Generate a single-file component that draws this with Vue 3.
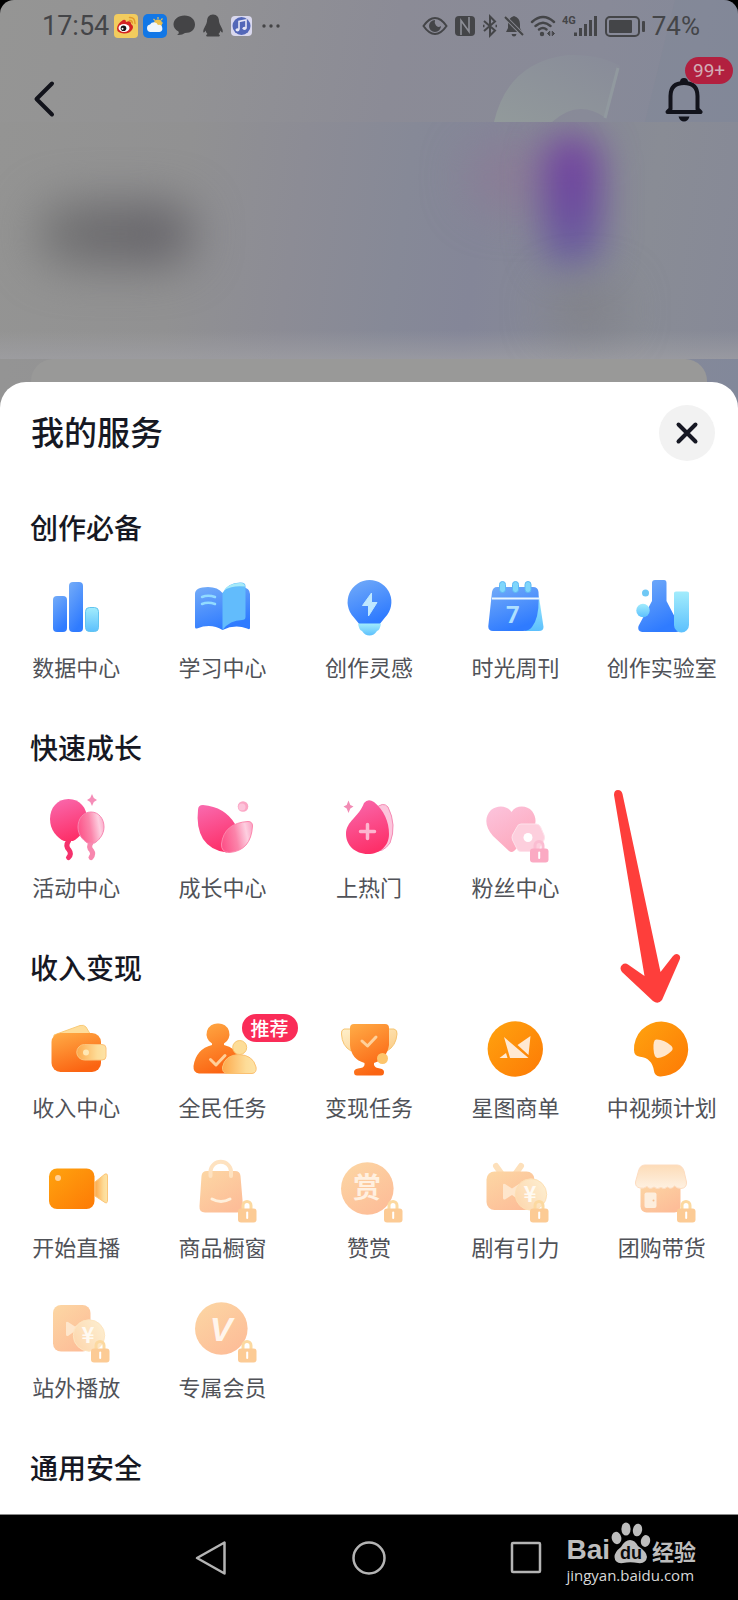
<template>
  <div class="phone">
    <svg class="sprite" aria-hidden="true">
      <defs>
        <linearGradient id="g-blue" x1="0" y1="0" x2=".4" y2="1">
          <stop offset="0" stop-color="#74acf8" />
          <stop offset="1" stop-color="#2f7bff" />
        </linearGradient>
        <linearGradient id="g-cyan" x1="0" y1="0" x2="0" y2="1">
          <stop offset="0" stop-color="#a2ecfc" />
          <stop offset="1" stop-color="#5cc0fd" />
        </linearGradient>
        <linearGradient id="g-pink" x1=".2" y1="0" x2=".5" y2="1">
          <stop offset="0" stop-color="#f968ac" />
          <stop offset="1" stop-color="#fd2f68" />
        </linearGradient>
        <linearGradient id="g-rose" x1="0" y1=".5" x2="1" y2=".3">
          <stop offset="0" stop-color="#fd5389" />
          <stop offset=".45" stop-color="#fb84aa" />
          <stop offset=".8" stop-color="#fdcfe0" />
          <stop offset="1" stop-color="#fba9c8" />
        </linearGradient>
        <linearGradient id="g-blush" x1="0" y1="0" x2=".6" y2="1">
          <stop offset="0" stop-color="#fcc4dd" />
          <stop offset="1" stop-color="#fda9bd" />
        </linearGradient>
        <linearGradient id="g-orange" x1=".1" y1="0" x2=".5" y2="1">
          <stop offset="0" stop-color="#ffaa45" />
          <stop offset="1" stop-color="#fb6412" />
        </linearGradient>
        <linearGradient id="g-amber" x1="0" y1="0" x2="1" y2="1">
          <stop offset="0" stop-color="#ffa30f" />
          <stop offset="1" stop-color="#fd7a05" />
        </linearGradient>
        <linearGradient id="g-gold" x1="0" y1="0" x2="1" y2="0">
          <stop offset="0" stop-color="#fda94b" />
          <stop offset=".7" stop-color="#fddc98" />
          <stop offset="1" stop-color="#fde3a6" />
        </linearGradient>
        <linearGradient id="g-cream" x1="0" y1="0" x2="1" y2="1">
          <stop offset="0" stop-color="#fff0cb" />
          <stop offset="1" stop-color="#fbcb85" />
        </linearGradient>
        <linearGradient id="g-peach" x1="0" y1="0" x2=".7" y2="1">
          <stop offset="0" stop-color="#fcd7a4" />
          <stop offset="1" stop-color="#fdbd98" />
        </linearGradient>
        <linearGradient id="g-coin" x1="0" y1=".8" x2="1" y2=".2">
          <stop offset="0" stop-color="#fdd7ae" />
          <stop offset="1" stop-color="#fdeed0" />
        </linearGradient>
        <linearGradient id="g-roof" x1="0" y1="0" x2="0" y2="1">
          <stop offset="0" stop-color="#fddcb8" />
          <stop offset="1" stop-color="#fef1e2" />
        </linearGradient>
      </defs>

      <symbol id="i-data" viewBox="0 0 72 72">
        <rect x="13" y="23" width="14" height="36" rx="4" fill="url(#g-blue)" />
        <rect x="29" y="9" width="14" height="50" rx="4" fill="url(#g-blue)" />
        <rect x="45.500" y="34.500" width="13" height="24" rx="4" fill="url(#g-cyan)" stroke="#62c4f0" />
      </symbol>

      <symbol id="i-book" viewBox="0 0 72 72">
        <path d="M8 21Q8 14 21 14Q31 14 35.500 20Q42 14 55 14Q63 15 63 21V55Q63 57 60 55.500Q48 51 35.500 57Q24 50 10 55.500Q8 56 8 54Z" fill="url(#g-blue)" />
        <path d="M35.500 20Q41 9 54 9.500Q58.500 9.500 58.500 13V44Q58.500 47 55 47Q43 47 35.500 57Z" fill="#62bcfc" />
        <path d="M37 17Q43 9.500 54 10Q58 10 58 13.500Q46 12 37 17Z" fill="#a6eaf8" />
        <path d="M15 24Q21 21.500 28 24M15 31Q21 28.500 28 31" fill="none" stroke="#92dbff" stroke-width="2.500" stroke-linecap="round" />
      </symbol>

      <symbol id="i-bulb" viewBox="0 0 72 72">
        <path d="M36.500 7A22 22 0 0 1 52 44.500L46 52H27L20.500 44A22 22 0 0 1 36.500 7Z" fill="url(#g-blue)" />
        <path d="M25 50.500H48Q47 57 44 58Q41 62.500 36.500 62.500Q32 62.500 29 58Q26 57 25 50.500Z" fill="url(#g-cyan)" />
        <path d="M38.500 20L29.500 32.500H35.500V43L44 29.500H38.500Z" fill="#bfe8ff" stroke="#bfe8ff" stroke-linejoin="round" />
      </symbol>

      <symbol id="i-calendar" viewBox="0 0 72 72">
        <path d="M56 20L60 24L64.500 54Q64.500 58 60 58H46Z" fill="url(#g-cyan)" />
        <path d="M18 14H54Q59 14 59.500 19Q61 44 53 54Q50 58 44 58H14Q9 58 9.300 53L13 19Q14 14 18 14Z" fill="url(#g-blue)" />
        <path d="M13 25.500H60" stroke="#e8f5ff" stroke-width="2" />
        <g fill="#7fd6fb" stroke="#5cb8f5">
          <rect x="20.500" y="8.500" width="6" height="11" rx="3" />
          <rect x="33.500" y="8.500" width="6" height="11" rx="3" />
          <rect x="46" y="8.500" width="6" height="11" rx="3" />
        </g>
      </symbol>

      <symbol id="i-lab" viewBox="0 0 72 72">
        <path d="M29 7H38Q40.500 7 40.500 10V28L54 54Q54 59 50 59H16Q11 58 12.500 53L26 28V10Q26 7 29 7Z" fill="url(#g-blue)" />
        <path d="M48 20Q48 18.500 50 18.500H61Q63 18.500 63 20V52A7.500 7.500 0 0 1 48 52Z" fill="url(#g-cyan)" />
        <circle cx="17" cy="37.500" r="6.700" fill="url(#g-cyan)" />
        <circle cx="19.500" cy="20" r="3.500" fill="#6fc8f5" />
      </symbol>

      <symbol id="i-balloon" viewBox="0 0 72 72">
        <path d="M28.500 48Q25 53 29 57Q32 61 28.500 64.500" fill="none" stroke="#f5316c" stroke-width="5" stroke-linecap="round" />
        <path d="M28.500 6C40 6 47 15 47 26C47 37 39 45 33 48H24C17 45 10 37 10 26C10 15 17 6 28.500 6Z" fill="url(#g-pink)" />
        <path d="M51 50Q48 54 51.500 57.500Q54 61 51 64.500" fill="none" stroke="#f887ae" stroke-width="5" stroke-linecap="round" />
        <path d="M51 19C59 19 64 26 64 34C64 42 58 48 54.500 50H47.500C43 47 38 42 38 34C38 26 43 19 51 19Z" fill="url(#g-rose)" stroke="#f886b1" />
        <path d="M52 1L53.800 5L57 7L53.800 9L52 13L50.200 9L47 7L50.200 5Z" fill="#f58db8" />
      </symbol>

      <symbol id="i-leaf" viewBox="0 0 72 72">
        <path d="M11 17Q11 12 16 12Q38 14 48 31Q54 46 40 59.500Q24 58 16 46Q9 34 11 17Z" fill="url(#g-pink)" />
        <path d="M61 28.500Q65.500 28.500 65.500 33Q64 58 42 59.500Q34 59 34.500 51Q37 30 61 28.500Z" fill="url(#g-rose)" stroke="#fc86ac" />
        <circle cx="56" cy="13.500" r="5.300" fill="#fba6c5" />
        <circle cx="55" cy="14" r="3.500" fill="#fdc3da" />
      </symbol>

      <symbol id="i-drop" viewBox="0 0 72 72">
        <path d="M42 16Q50 8 55 14Q64 32 57 50Q50 60 40 58Z" fill="#fcc5dc" stroke="#f58bb4" />
        <path d="M31 10Q35 5 41 9C51 17 56 29 56 41C56 53 47 61 35 61C22 61 13 52 13 41C13 28 26 24 31 10Z" fill="url(#g-pink)" />
        <path d="M27.500 38.500H41.500M34.500 31.500V45.500" stroke="#fdb5cf" stroke-width="3.500" stroke-linecap="round" />
        <path d="M15.500 7.500L17.300 12L20.500 13.500L17.300 15.500L15.500 20L13.700 15.500L10.500 13.500L13.700 12Z" fill="#f28bb4" />
      </symbol>

      <symbol id="i-fans" viewBox="0 0 72 72">
        <path d="M32.500 19C37 11.500 48 12 53 18C59 26 57 35 50 43L35 58Q32.500 60 30 58L14 43C6 34 5 24 12 17C18 12 28 12 32.500 19Z" fill="url(#g-blush)" />
        <path d="M42 31H57Q60 31 61.500 34L65 42Q66 44.500 65 47L61 55Q60 58.500 57 58.500H42Q39 58.500 38 56L33.500 47Q32.500 44.500 33.500 42L38 34Q39 31 42 31Z" fill="#fdcfdd" stroke="#fee2eb" />
        <circle cx="49" cy="44.500" r="4.500" fill="#fff" />
      </symbol>

      <symbol id="i-wallet" viewBox="0 0 72 72">
        <path d="M14 22L40 12.500Q44 11.500 46 14L52 24H14Z" fill="#fedd9a" stroke="#f9cb78" />
        <rect x="11.500" y="20" width="49.500" height="39" rx="9" fill="url(#g-orange)" />
        <path d="M44.500 31.500H62Q66 31.500 66 35V43.500Q66 47 62 47H44.500A7.500 7.500 0 0 1 44.500 31.500Z" fill="url(#g-gold)" stroke="#fcc47c" />
        <circle cx="46" cy="39.500" r="3" fill="#ffe7b3" />
      </symbol>

      <symbol id="i-people" viewBox="0 0 72 72">
        <path d="M31 10.500A10.700 10.700 0 0 1 37 30.500V32Q48 34 54 46L46 60.500H12Q6 60 6.500 53Q9 36 25 32V30.500A10.700 10.700 0 0 1 31 10.500Z" fill="url(#g-orange)" />
        <circle cx="52.700" cy="34.500" r="7" fill="#fddd98" stroke="#f8c672" />
        <path d="M40 60.500Q35 60 35.500 54Q38 42 52 41.500Q66 42 69 54Q70 60 65 60.500Z" fill="url(#g-gold)" stroke="#fbc071" />
        <path d="M23.500 46.500L29 52L38 42.500" fill="none" stroke="#ffd09a" stroke-width="3" stroke-linecap="round" stroke-linejoin="round" />
      </symbol>

      <symbol id="i-trophy" viewBox="0 0 72 72">
        <path d="M18 16H11Q8 17 8.500 21Q9 33 18 38ZM54 16H61Q64.500 17 64 21Q63 33 54 38Z" fill="url(#g-cream)" stroke="#f6c470" />
        <path d="M21 11H52Q56 11 56 15V32Q54 46 41 50V52Q42 55 47 55.500Q51 56 51 59Q51 62.500 48 62.500H24Q21 62.500 21 59Q21 56 25 55.500Q31 55 31.500 52V50Q18 46 17 32V15Q17 11 21 11Z" fill="url(#g-orange)" />
        <path d="M29 28L34.500 33L43 24" fill="none" stroke="#ffd09a" stroke-width="3" stroke-linecap="round" stroke-linejoin="round" />
        <circle cx="49.500" cy="45.500" r="5.500" fill="#fdc56c" />
      </symbol>

      <symbol id="i-crane" viewBox="0 0 72 72">
        <circle cx="36.300" cy="36" r="27.700" fill="url(#g-amber)" />
        <path d="M25 24L49.500 45H31ZM51.500 23L49.500 42L38.500 32ZM20.500 45L27 40L28.500 45Z" fill="#ffe9d3" />
      </symbol>

      <symbol id="i-play" viewBox="0 0 72 72">
        <path d="M35.500 8.500A27.400 27.400 0 1 1 34 63.400Q28.500 63 28 58Q26 45 14 43.800Q8 43 8 37A27.400 27.400 0 0 1 35.500 8.500Z" fill="url(#g-amber)" />
        <path d="M30 26.500Q38 26 45.500 33Q48 36 45 38.500Q38 45 31.500 45Q28 44.500 27.500 36Q27 27 30 26.500Z" fill="#ffe6cc" />
      </symbol>

      <symbol id="i-live" viewBox="0 0 72 72">
        <path d="M55 29L65 21Q67.500 20 67.500 23V47Q67.500 51 65 49.500L55 43Z" fill="url(#g-gold)" stroke="#fcc678" />
        <rect x="9" y="15.500" width="45.500" height="40.500" rx="8" fill="url(#g-amber)" />
        <circle cx="18" cy="25" r="3" fill="#ffd29a" />
      </symbol>

      <symbol id="i-bag" viewBox="0 0 72 72">
        <path d="M20 18H48Q53 18 53.500 23L56 53Q56 59.500 50 59.500H18Q12 59.500 12.500 53L14.500 23Q15 18 20 18Z" fill="url(#g-peach)" />
        <path d="M23.500 23V18A10.300 10.300 0 0 1 44 18V23" fill="none" stroke="#fee2c0" stroke-width="4" stroke-linecap="round" />
        <path d="M25 46Q34 51 43 46" fill="none" stroke="#fff0dc" stroke-width="3" stroke-linecap="round" />
      </symbol>

      <symbol id="i-disc" viewBox="0 0 72 72">
        <circle cx="34.300" cy="35.500" r="26.300" fill="url(#g-peach)" />
      </symbol>

      <symbol id="i-drama" viewBox="0 0 72 72">
        <path d="M17 13L22 20M42 13L37 20" stroke="#fde0bb" stroke-width="6" stroke-linecap="round" />
        <rect x="7.500" y="18.500" width="48" height="38.500" rx="8" fill="url(#g-peach)" />
        <path d="M24 32Q24 30 26 31L33 35.500L40 31V47L33 42L26 46.500Q24 47 24 45Z" fill="#fee6cc" />
        <circle cx="52" cy="41.500" r="15.700" fill="url(#g-coin)" stroke="#fde0b4" />
      </symbol>

      <symbol id="i-shop" viewBox="0 0 72 72">
        <rect x="14.500" y="28" width="40" height="31.500" rx="6" fill="url(#g-peach)" />
        <path d="M19 12H51Q56 12 58 18L60.500 29Q61 35 55 35.500Q51 35.500 48.500 33Q45 37 41.500 34Q38 37 35 34.500Q31 37 28 34Q24 37 21 33.500Q18 36 14 35Q9 34 9.500 29L12.500 18Q14 12 19 12Z" fill="url(#g-roof)" stroke="#fddcc0" />
        <rect x="18.500" y="39.500" width="12" height="15.500" rx="2" fill="#fdeedd" />
        <circle cx="27.500" cy="47.500" r="1" fill="#f5bf90" />
      </symbol>

      <symbol id="i-offsite" viewBox="0 0 72 72">
        <rect x="13" y="12" width="37.500" height="46.500" rx="8" fill="url(#g-peach)" />
        <path d="M26 30Q26 28 28 29L35 33.500L42 29V42L35 38L28 43Q26 43.500 26 41.500Z" fill="#fee6cc" />
        <circle cx="49" cy="42.500" r="15.700" fill="url(#g-coin)" stroke="#fde5c0" />
      </symbol>

      <symbol id="i-lock-orange" viewBox="0 0 20 24">
        <path d="M6 11V6.500A4 4 0 0 1 14 6.500V11" fill="none" stroke="#fcd9a0" stroke-width="3" />
        <rect x="1" y="9.500" width="18.500" height="14" rx="3" fill="#fccb95" />
        <path d="M10.200 13.500V19" stroke="#fff" stroke-width="2" stroke-linecap="round" />
      </symbol>
      <symbol id="i-lock-pink" viewBox="0 0 20 24">
        <path d="M6 11V6.500A4 4 0 0 1 14 6.500V11" fill="none" stroke="#fbbdd2" stroke-width="3" />
        <rect x="1" y="9.500" width="18.500" height="14" rx="3" fill="#fbaac3" />
        <path d="M10.200 13.500V19" stroke="#fff" stroke-width="2" stroke-linecap="round" />
      </symbol>
    </svg>

    <header class="hero">
      <svg class="hero__dial" viewBox="0 0 260 122" aria-hidden="true">
        <defs>
          <linearGradient id="g-dial" x1="0" y1="1" x2="1" y2="0">
            <stop offset="0" stop-color="#929a9b" />
            <stop offset="1" stop-color="#888b99" />
          </linearGradient>
        </defs>
        <path d="M167 122L197 0H260V122Z" fill="#7f8896" opacity=".4" />
        <path d="M16 122Q30 62 90 55Q122 54 142 66L128 118Q100 98 74 122Z" fill="url(#g-dial)" />
        <path d="M140 68L127 118" stroke="#91999f" stroke-width="3" />
      </svg>

      <div class="status">
        <div class="status__side">
          <span>17:54</span>
          <svg width="24" height="24" viewBox="0 0 24 24" aria-hidden="true">
            <rect width="24" height="24" rx="4" fill="#f2cc5e" />
            <path d="M3 14.500Q3 10 9 6Q12 5 12 8Q17 6 17 10Q20 12 18.500 15Q16 19.500 10 19.500Q3 19 3 14.500Z" fill="#d32321" />
            <ellipse cx="10" cy="14" rx="5.500" ry="4" fill="#fff" />
            <circle cx="9.500" cy="14.300" r="2.800" fill="#161616" />
            <circle cx="8.500" cy="14.800" r="1" fill="#fff" />
            <path d="M15.500 3.500Q21 3 21 9.500M15.500 6.500Q18 6 18.300 9" fill="none" stroke="#e39a2c" stroke-width="1.500" stroke-linecap="round" />
          </svg>
          <svg width="24" height="24" viewBox="0 0 24 24" aria-hidden="true">
            <rect width="24" height="24" rx="5" fill="#1277e6" />
            <path d="M15 3V5M20 9H18.500M10.500 5L12 6.500M19.500 4.500L18 6" stroke="#e8c257" stroke-width="1.200" />
            <circle cx="15" cy="9.500" r="4" fill="#edc04c" />
            <path d="M7.500 18A3.800 3.800 0 0 1 7 10.500A4.500 4.500 0 0 1 15 11A3.500 3.500 0 0 1 16.500 18Z" fill="#eef5fb" />
          </svg>
          <svg width="24" height="24" viewBox="0 0 24 24" aria-hidden="true">
            <path d="M12.500 1.500C19 1.500 23 5.500 23 10.500C23 15.500 19 19 13 19Q10 21.500 5 21Q7.500 19.500 6.500 17.500C3.500 16 1.500 13.500 1.500 10.500C1.500 5.500 6 1.500 12.500 1.500Z" fill="#444446" />
          </svg>
          <svg width="24" height="24" viewBox="0 0 24 24" aria-hidden="true">
            <path d="M12 .500C16 .500 18 3.500 18 7.500Q18.500 10 20 12.500Q22.500 17 21.500 18.500Q20.500 19 19.500 16.500Q19 18.500 17.500 20Q20 21.500 18 22.500H6Q4 21.500 6.500 20Q5 18.500 4.500 16.500Q3.500 19 2.500 18.500Q1.500 17 4 12.500Q5.500 10 6 7.500C6 3.500 8 .500 12 .500Z" fill="#444446" />
          </svg>
          <svg width="24" height="24" viewBox="0 0 24 24" aria-hidden="true">
            <rect x="1" y="2" width="21" height="20" rx="4" fill="#d9d8ee" />
            <circle cx="11.500" cy="12" r="9" fill="#5367b8" />
            <path d="M9 15.500V7.500L16 6V14" fill="none" stroke="#e6e6f5" stroke-width="1.600" />
            <ellipse cx="7.500" cy="15.800" rx="2" ry="1.600" fill="#e6e6f5" />
            <ellipse cx="14.500" cy="14.300" rx="2" ry="1.600" fill="#e6e6f5" />
          </svg>
          <svg width="24" height="24" viewBox="0 0 24 24" fill="#444446" aria-hidden="true">
            <circle cx="5" cy="12" r="1.700" /><circle cx="12" cy="12" r="1.700" /><circle cx="19" cy="12" r="1.700" />
          </svg>
        </div>
        <div class="status__side status__side--right">
          <svg width="26" height="24" viewBox="0 0 26 24" aria-hidden="true">
            <path d="M1.500 12Q7 4 13 4Q19 4 24.500 12Q19 20 13 20Q7 20 1.500 12Z" fill="none" stroke="#444548" stroke-width="2" />
            <path d="M13 6A6 6 0 1 0 19 12Q16 14 14 11.500Q12 9 13 6Z" fill="#444548" />
          </svg>
          <svg width="22" height="24" viewBox="0 0 22 24" aria-hidden="true">
            <rect x="1" y="2" width="20" height="20" rx="4" fill="#444548" />
            <path d="M7 21V6.500L15 17.500V3" fill="none" stroke="#8d8e96" stroke-width="1.600" />
          </svg>
          <svg width="16" height="24" viewBox="0 0 16 24" fill="none" stroke="#444548" stroke-width="2" aria-hidden="true">
            <path d="M2 7L13 16.500L8 21.500V2.500L13 7.500L2 17" /><path d="M1 12H2.500M13.500 12H15" stroke-width="2.500" />
          </svg>
          <svg width="20" height="24" viewBox="0 0 20 24" aria-hidden="true">
            <path d="M10 2Q16 4 16 10V14L18 18H2L4 14V10Q4 4 10 2ZM7.500 20H12.500Q12 22.500 10 22.500Q8 22.500 7.500 20Z" fill="#444548" />
            <path d="M1 3L19 21" stroke="#8b8c94" stroke-width="4" /><path d="M1 3L19 21" stroke="#444548" stroke-width="2" />
          </svg>
          <svg width="26" height="24" viewBox="0 0 26 24" fill="none" stroke="#444548" stroke-width="2.400" stroke-linecap="round" aria-hidden="true">
            <path d="M2 8Q13 -2 24 8M5.500 12Q13 5.500 20.500 12M9 15.500Q13 12.500 16.500 15.500" />
            <circle cx="12" cy="20" r="1" /><path d="M19.500 17.500L17.500 19.500L19.500 21.500ZM22.500 17.500L24.500 19.500L22.500 21.500Z" stroke-width="1" fill="#444548" />
          </svg>
          <svg width="36" height="24" viewBox="0 0 36 24" fill="#444548" aria-hidden="true">
            <text x="0" y="10" font-family="Roboto, sans-serif" font-size="11" font-weight="700">4G</text>
            <rect x="12" y="18.500" width="3" height="3.500" /><rect x="17" y="14" width="3" height="8" />
            <rect x="22" y="10" width="3" height="12" /><rect x="27" y="6" width="3" height="16" /><rect x="32" y="2" width="3" height="20" />
          </svg>
          <svg width="42" height="24" viewBox="0 0 42 24" aria-hidden="true">
            <rect x="2" y="3" width="33" height="19" rx="4" fill="none" stroke="#444548" stroke-width="2" />
            <rect x="5" y="6" width="23" height="13" rx="1" fill="#444548" />
            <rect x="38" y="7" width="3" height="11" rx="1" fill="#444548" />
          </svg>
          <span class="status__level">74%</span>
        </div>
      </div>

      <div class="topbar">
        <button class="topbar__back" type="button" aria-label="返回">
          <svg width="22" height="38" viewBox="0 0 22 38" aria-hidden="true">
            <path d="M19 3.500L3.500 19L19 34.500" fill="none" stroke="#12131b" stroke-width="4" stroke-linecap="round" stroke-linejoin="round" />
          </svg>
        </button>
        <button class="topbar__bell" type="button" aria-label="通知">
          <svg width="38" height="46" viewBox="0 0 38 46" aria-hidden="true">
            <path d="M5.500 33V20Q5.500 7 19 7Q32.500 7 32.500 20V33L35.500 36H2.500Z" fill="none" stroke="#12131b" stroke-width="4" stroke-linejoin="round" />
            <path d="M15 6A4 4 0 0 1 23 6ZM13.500 40.500H24.500Q23 45.500 19 45.500Q15 45.500 13.500 40.500Z" fill="#12131b" />
          </svg>
          <span class="topbar__badge">99+</span>
        </button>
      </div>

      <div class="hero__blur">
        <span class="smudge smudge--name"></span>
        <span class="smudge smudge--halo"></span>
        <span class="smudge smudge--purple"></span>
        <span class="smudge smudge--base"></span>
      </div>
      <div class="hero__card"></div>
    </header>

    <main class="sheet">
      <div class="sheet__head">
        <h1 class="sheet__title">我的服务</h1>
        <button class="sheet__close" type="button" aria-label="关闭">
          <svg width="24" height="24" viewBox="0 0 24 24" aria-hidden="true">
            <path d="M3.500 3.500L20.500 20.500M20.500 3.500L3.500 20.500" stroke="#161823" stroke-width="4" stroke-linecap="round" />
          </svg>
        </button>
      </div>

      <section v-for="group in groups" :key="group.title" class="group">
        <h2 class="group__title">{{ group.title }}</h2>
        <div v-if="group.items.length" class="group__grid">
          <button v-for="item in group.items" :key="item.name" class="service" type="button">
            <span class="service__icon">
              <svg width="72" height="72" viewBox="0 0 72 72" aria-hidden="true">
                <use :href="'#i-' + item.icon" />
                <text
                  v-if="item.glyph"
                  :x="item.glyph.x"
                  :y="item.glyph.y"
                  :class="['glyph', 'glyph--' + item.glyph.kind]"
                >{{ item.glyph.text }}</text>
              </svg>
              <svg v-if="item.lock" class="service__lock" width="20" height="24" aria-hidden="true">
                <use :href="'#i-lock-' + item.lock" />
              </svg>
              <span v-if="item.tag" class="service__tag">{{ item.tag }}</span>
            </span>
            <span class="service__name">{{ item.name }}</span>
          </button>
        </div>
        <svg v-if="group.pointer" class="group__pointer" width="68" height="216" viewBox="0 0 68 216" aria-hidden="true">
          <path d="M1 6Q1 1 5 1Q8.500 1 9.500 5L47.500 183L60 167Q63 163.500 66 166Q68 168 66.500 171L49 211Q45 216 40 212L9 183Q6 179 9 176Q12 173.500 15 175.500L31.500 187Z" fill="#fe3e3b" />
        </svg>
      </section>
    </main>

    <nav class="nav">
      <button class="nav__btn" type="button" aria-label="后退">
        <svg width="34" height="36" viewBox="0 0 34 36" aria-hidden="true">
          <path d="M30.500 2.500V33.500L3 18Z" fill="none" stroke="#b4b4b4" stroke-width="2.500" stroke-linejoin="round" />
        </svg>
      </button>
      <button class="nav__btn" type="button" aria-label="主页">
        <svg width="34" height="36" viewBox="0 0 34 36" aria-hidden="true">
          <circle cx="17" cy="18" r="15.500" fill="none" stroke="#b4b4b4" stroke-width="2.500" />
        </svg>
      </button>
      <button class="nav__btn" type="button" aria-label="最近任务">
        <svg width="34" height="36" viewBox="0 0 34 36" aria-hidden="true">
          <rect x="2" y="3" width="28" height="29" rx="1" fill="none" stroke="#b4b4b4" stroke-width="2.500" />
        </svg>
      </button>

      <div class="mark">
        <div class="mark__row">
          <span class="mark__bai">Bai</span>
          <svg width="40" height="42" viewBox="0 0 40 42" aria-hidden="true">
            <g fill="#bdbdbd">
              <ellipse cx="5.500" cy="16" rx="4.800" ry="6.200" transform="rotate(-12 5.500 16)" />
              <ellipse cx="15" cy="7" rx="4.600" ry="6.600" />
              <ellipse cx="26.500" cy="8" rx="4.600" ry="6.400" transform="rotate(10 26.500 8)" />
              <ellipse cx="34.500" cy="19" rx="4.600" ry="6" transform="rotate(12 34.500 19)" />
              <path d="M19 18Q24 18 27 24Q36 30 36 35Q35 42 27 41Q19 39.500 12 41Q4 42 3.500 35Q3.500 30 10 25Q14 18 19 18Z" />
            </g>
            <text x="20" y="37" text-anchor="middle" font-family="Liberation Sans, sans-serif" font-size="18" font-weight="700" fill="#0b0b0b">du</text>
          </svg>
          <span class="mark__cn">经验</span>
        </div>
        <span class="mark__url">jingyan.baidu.com</span>
      </div>
    </nav>
  </div>
</template>

<script setup>
const groups = [
  {
    title: '创作必备',
    items: [
      { name: '数据中心', icon: 'data' },
      { name: '学习中心', icon: 'book' },
      { name: '创作灵感', icon: 'bulb' },
      { name: '时光周刊', icon: 'calendar', glyph: { text: '7', kind: 'day', x: 34, y: 50 } },
      { name: '创作实验室', icon: 'lab' },
    ],
  },
  {
    title: '快速成长',
    pointer: true,
    items: [
      { name: '活动中心', icon: 'balloon' },
      { name: '成长中心', icon: 'leaf' },
      { name: '上热门', icon: 'drop' },
      { name: '粉丝中心', icon: 'fans', lock: 'pink' },
    ],
  },
  {
    title: '收入变现',
    items: [
      { name: '收入中心', icon: 'wallet' },
      { name: '全民任务', icon: 'people', tag: '推荐' },
      { name: '变现任务', icon: 'trophy' },
      { name: '星图商单', icon: 'crane' },
      { name: '中视频计划', icon: 'play' },
      { name: '开始直播', icon: 'live' },
      { name: '商品橱窗', icon: 'bag', lock: 'orange' },
      { name: '赞赏', icon: 'disc', lock: 'orange', glyph: { text: '赏', kind: 'reward', x: 34, y: 45 } },
      { name: '剧有引力', icon: 'drama', lock: 'orange', glyph: { text: '¥', kind: 'yuan', x: 51, y: 49 } },
      { name: '团购带货', icon: 'shop', lock: 'orange' },
      { name: '站外播放', icon: 'offsite', lock: 'orange', glyph: { text: '¥', kind: 'yuan', x: 48, y: 50 } },
      { name: '专属会员', icon: 'disc', lock: 'orange', glyph: { text: 'V', kind: 'vip', x: 34, y: 48 } },
    ],
  },
  { title: '通用安全', items: [] },
]
</script>

<style>
body {
  margin: 0;
  background: #000;
}
</style>

<style scoped>
.phone {
  display: flex;
  flex-direction: column;
  min-height: 100vh;
  background: #000;
  font-family: 'Noto Sans CJK SC', sans-serif;
  color: #161823;
}

button {
  margin: 0;
  padding: 0;
  border: none;
  background: none;
  font: inherit;
  color: inherit;
  cursor: pointer;
}

svg {
  display: block;
  flex: none;
}

.sprite {
  position: absolute;
  width: 0;
  height: 0;
}

/* dimmed page behind the sheet */
.hero {
  position: relative;
  border-radius: 14px 14px 0 0;
  overflow: hidden;
  background: linear-gradient(100deg, #959594 0%, #929294 25%, #8b8b96 50%, #888a98 75%, #82889a 100%);
}

.hero__dial {
  position: absolute;
  top: 0;
  right: 0;
  width: 260px;
  height: 122px;
}

.status {
  position: relative;
  display: flex;
  justify-content: space-between;
  padding: 14px 38px 0 42px;
  font-family: Roboto, sans-serif;
  font-size: 27px;
  line-height: 24px;
  color: #444548;
}

.status__side {
  display: flex;
  align-items: center;
  gap: 5px;
}

.status__side--right {
  gap: 6px;
}

.status__level {
  font-size: 26px;
}

.topbar {
  position: relative;
  display: flex;
  align-items: center;
  justify-content: space-between;
  height: 46px;
  padding: 38px 35px 0 33px;
}

.topbar__bell {
  position: relative;
}

.topbar__badge {
  position: absolute;
  left: 20px;
  bottom: 38px;
  padding: 0 8px;
  border-radius: 14px;
  background: #b2203f;
  font-family: Roboto, sans-serif;
  font-size: 19px;
  line-height: 27px;
  color: #d3adb6;
}

.hero__blur {
  position: relative;
  height: 237px;
  overflow: hidden;
  background:
    linear-gradient(0deg, rgba(160, 160, 165, 0.7), transparent 12%),
    linear-gradient(98deg, #949493 0%, #919192 25%, #8c8c95 40%, #868997 54%, #848698 64%, #898c95 86%, #868997 100%);
}

.smudge {
  position: absolute;
  border-radius: 40px;
  filter: blur(24px);
}

.smudge--name {
  left: 38px;
  top: 82px;
  width: 155px;
  height: 60px;
  background: linear-gradient(90deg, #727272, #605e65);
}

.smudge--halo {
  left: 470px;
  top: 25px;
  width: 90px;
  height: 60px;
  background: rgba(142, 118, 150, 0.7);
}

.smudge--purple {
  left: 543px;
  top: 12px;
  width: 58px;
  height: 136px;
  background: linear-gradient(180deg, #76449f 0%, #6c469f 45%, #6a689d 100%);
  filter: blur(18px);
}

.smudge--base {
  left: 550px;
  top: 165px;
  width: 70px;
  height: 45px;
  background: rgba(126, 126, 130, 0.8);
}

.hero__card {
  height: 49px;
  margin: 0 31px;
  border-radius: 22px 22px 0 0;
  background: #999998;
}

.sheet {
  position: relative;
  flex: 1;
  margin-top: -26px;
  padding: 23px 3px 24px;
  border-bottom: 1px solid #8a8a8a;
  border-radius: 26px 26px 0 0;
  background: #fff;
}

.sheet__head {
  display: flex;
  align-items: center;
  justify-content: space-between;
  padding: 0 20px 0 28px;
}

.sheet__title {
  margin: 0;
  padding-bottom: 4px;
  font-size: 33px;
  font-weight: 500;
  line-height: 48px;
}

.sheet__close {
  display: flex;
  align-items: center;
  justify-content: center;
  width: 56px;
  height: 56px;
  border-radius: 50%;
  background: #f2f2f2;
}

.group {
  position: relative;
  margin-top: 46px;
}

.group__title {
  margin: 0;
  padding-left: 27px;
  font-size: 28px;
  font-weight: 500;
  line-height: 40px;
}

.group__grid {
  display: grid;
  grid-template-columns: repeat(5, 1fr);
  row-gap: 32px;
  margin-top: 26px;
}

.service {
  display: flex;
  flex-direction: column;
  align-items: center;
  gap: 6px;
}

.service__icon {
  position: relative;
}

.service__lock {
  position: absolute;
  left: 50px;
  top: 46px;
}

.service__tag {
  position: absolute;
  left: 55px;
  top: 1px;
  padding: 0 9px;
  border-radius: 14px;
  background: #fa2c58;
  font-size: 19px;
  font-weight: 500;
  line-height: 28px;
  color: #fff;
  white-space: nowrap;
}

.service__name {
  font-size: 22px;
  line-height: 30px;
  color: #505258;
  white-space: nowrap;
}

/* characters printed on an icon */
.glyph {
  text-anchor: middle;
  font-weight: 700;
}

.glyph--day {
  font-family: Roboto, sans-serif;
  font-size: 24px;
  fill: #aee0ff;
}

.glyph--reward {
  font-size: 28px;
  fill: #fff0e0;
}

.glyph--yuan {
  font-size: 22px;
  fill: #fffaf2;
}

.glyph--vip {
  font-family: 'Liberation Sans', sans-serif;
  font-size: 34px;
  font-style: italic;
  fill: #fff5ec;
}

.group__pointer {
  position: absolute;
  top: 62px;
  right: 54px;
}

.nav {
  position: relative;
  display: flex;
  align-items: center;
  justify-content: center;
  gap: 124px;
  min-height: 85px;
  background: #000;
}

.mark {
  position: absolute;
  right: 42px;
  bottom: 14px;
  display: flex;
  flex-direction: column;
  color: #bdbdbd;
}

.mark__row {
  display: flex;
  align-items: flex-end;
  gap: 1px;
}

.mark__bai {
  font-family: 'Liberation Sans', sans-serif;
  font-size: 28px;
  font-weight: 700;
  line-height: 28px;
}

.mark__cn {
  font-size: 22px;
  font-weight: 700;
  line-height: 28px;
}

.mark__url {
  font-family: 'Open Sans', sans-serif;
  font-size: 15px;
  line-height: 22px;
  color: #d8d8d8;
}
</style>
